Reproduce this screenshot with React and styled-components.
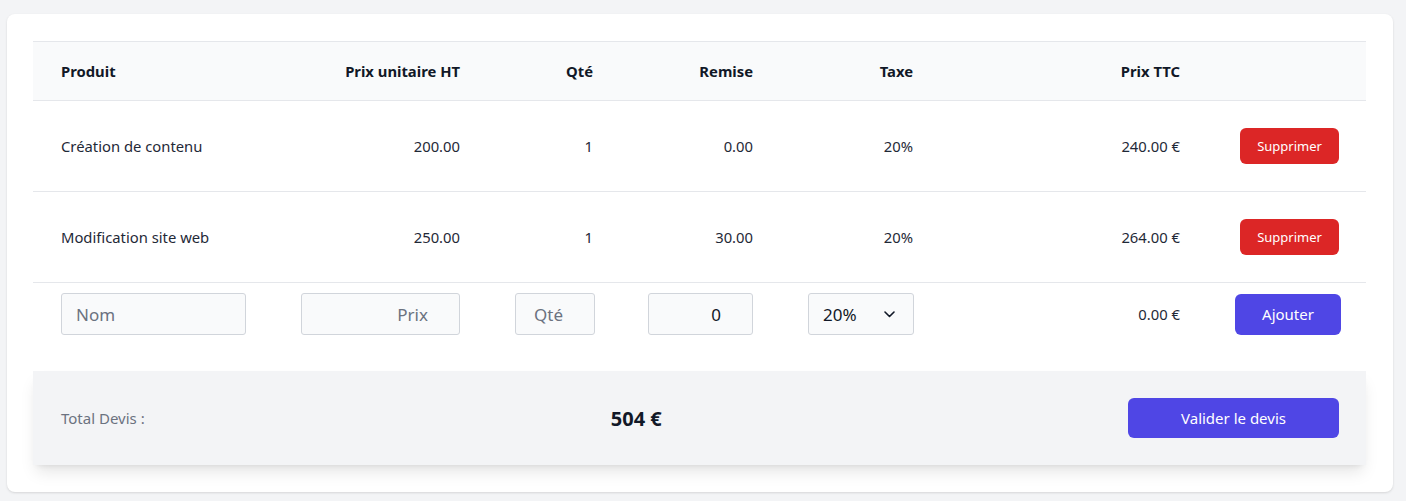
import React from "react";
import styled, { createGlobalStyle } from "styled-components";

const Global = createGlobalStyle`
  html, body { margin: 0; padding: 0; background: #f3f4f6; }
  body { font-family: "Noto Sans", "Open Sans", sans-serif; color: #1f2937; }
  * { box-sizing: border-box; }
`;

const Page = styled.div`
  padding: 14px 13px 9px 7px;
`;

const Card = styled.div`
  background: #fff;
  border-radius: 8px;
  box-shadow: 0 1px 3px rgba(0, 0, 0, 0.08), 0 1px 2px rgba(0, 0, 0, 0.05);
  padding: 27px 27px 27px 26px;
`;

const Table = styled.table`
  width: 100%;
  border-collapse: collapse;
  table-layout: fixed;
  font-size: 14.8px;
`;

const HeadRow = styled.tr`
  background: #f9fafb;
  border-top: 1px solid #e5e7eb;
  border-bottom: 1px solid #e5e7eb;
`;

const Th = styled.th`
  height: 59px;
  padding: 0 27px 0 28px;
  font-weight: 700;
  color: #111827;
  text-align: ${(p) => p.$align || "left"};
`;

const Row = styled.tr`
  border-bottom: 1px solid #e5e7eb;
`;

const Td = styled.td`
  height: 91px;
  padding: 0 27px 0 28px;
  color: #1f2937;
  text-align: ${(p) => p.$align || "left"};
  vertical-align: middle;
`;

const InputCell = styled.td`
  padding: 10px 27px 10px 28px;
  text-align: ${(p) => p.$align || "left"};
  vertical-align: middle;
  color: #1f2937;
`;

const Field = styled.input`
  display: block;
  width: ${(p) => p.$w}px;
  margin-left: ${(p) => (p.$right ? "auto" : "0")};
  margin-right: ${(p) => (p.$right ? "1px" : "0")};
  height: 42px;
  background: #f9fafb;
  border: 1px solid #d1d5db;
  border-radius: 3px;
  font-family: inherit;
  font-size: 17px;
  color: #111827;
  outline: none;
  text-align: ${(p) => (p.$right ? "right" : "left")};
  padding: ${(p) => (p.$right ? "0 31px 0 10px" : "0 12px 0 14px")};
  &::placeholder { color: #6b7280; }
`;

const SelectBox = styled.div`
  width: 106px;
  height: 42px;
  background: #f9fafb;
  border: 1px solid #d1d5db;
  border-radius: 3px;
  display: flex;
  align-items: center;
  justify-content: space-between;
  padding: 0 18px 0 14px;
  font-size: 17px;
  color: #111827;
`;

const Btn = styled.button`
  border: none;
  border-radius: 6px;
  color: #fff;
  font-family: inherit;
  cursor: pointer;
  background: ${(p) => (p.$danger ? "#dc2626" : "#4f46e5")};
  width: ${(p) => p.$w}px;
  height: ${(p) => p.$h}px;
  font-size: ${(p) => p.$fs}px;
  margin-left: ${(p) => (p.$inline ? "0" : "auto")};
  display: block;
`;

const Footer = styled.div`
  margin-top: 26px;
  background: #f3f4f6;
  box-shadow: 0 10px 15px -3px rgba(0, 0, 0, 0.1), 0 4px 6px -4px rgba(0, 0, 0, 0.1);
  display: flex;
  align-items: center;
  justify-content: space-between;
  padding: 27px 27px 27px 28px;
`;

const TotalLabel = styled.span`
  font-size: 15px;
  color: #6b7280;
`;

const TotalValue = styled.span`
  font-size: 20px;
  font-weight: 700;
  color: #111827;
`;

const Chevron = () => (
  <svg width="11" height="7" viewBox="0 0 11 7" fill="none">
    <path d="M1 1l4.5 4.5L10 1" stroke="#111827" strokeWidth="1.6" strokeLinecap="round" strokeLinejoin="round" />
  </svg>
);

const items = [
  { name: "Création de contenu", price: "200.00", qty: "1", discount: "0.00", tax: "20%", ttc: "240.00 €" },
  { name: "Modification site web", price: "250.00", qty: "1", discount: "30.00", tax: "20%", ttc: "264.00 €" },
];

export default function App() {
  return (
    <>
      <Global />
      <Page>
        <Card>
          <Table>
            <colgroup>
              <col style={{ width: 240 }} />
              <col style={{ width: 214 }} />
              <col style={{ width: 133 }} />
              <col style={{ width: 160 }} />
              <col style={{ width: 160 }} />
              <col style={{ width: 267 }} />
              <col style={{ width: 159 }} />
            </colgroup>
            <thead>
              <HeadRow>
                <Th>Produit</Th>
                <Th $align="right">Prix unitaire HT</Th>
                <Th $align="right">Qté</Th>
                <Th $align="right">Remise</Th>
                <Th $align="right">Taxe</Th>
                <Th $align="right">Prix TTC</Th>
                <Th />
              </HeadRow>
            </thead>
            <tbody>
              {items.map((it) => (
                <Row key={it.name}>
                  <Td>{it.name}</Td>
                  <Td $align="right">{it.price}</Td>
                  <Td $align="right">{it.qty}</Td>
                  <Td $align="right">{it.discount}</Td>
                  <Td $align="right">{it.tax}</Td>
                  <Td $align="right">{it.ttc}</Td>
                  <Td>
                    <Btn $danger $w={99} $h={36} $fs={13}>Supprimer</Btn>
                  </Td>
                </Row>
              ))}
              <tr>
                <InputCell>
                  <Field $w={185} placeholder="Nom" />
                </InputCell>
                <InputCell>
                  <Field $w={159} $right placeholder="Prix" />
                </InputCell>
                <InputCell>
                  <Field $w={80} $right placeholder="Qté" />
                </InputCell>
                <InputCell>
                  <Field $w={105} $right defaultValue="0" />
                </InputCell>
                <InputCell>
                  <SelectBox>
                    <span>20%</span>
                    <Chevron />
                  </SelectBox>
                </InputCell>
                <InputCell $align="right">0.00 €</InputCell>
                <InputCell>
                  <Btn $w={106} $h={41} $fs={15}>Ajouter</Btn>
                </InputCell>
              </tr>
            </tbody>
          </Table>
          <Footer>
            <TotalLabel>Total Devis :</TotalLabel>
            <TotalValue>504 €</TotalValue>
            <Btn $inline $w={211} $h={40} $fs={15}>Valider le devis</Btn>
          </Footer>
        </Card>
      </Page>
    </>
  );
}
